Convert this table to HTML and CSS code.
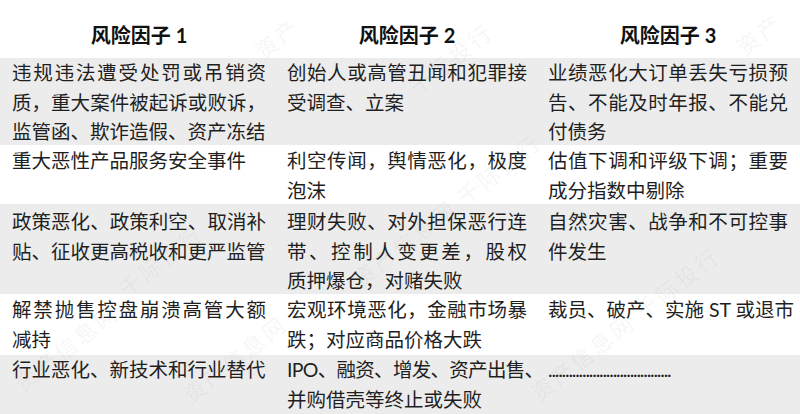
FILE: index.html
```html
<!DOCTYPE html>
<html lang="zh-CN">
<head>
<meta charset="utf-8">
<title>风险因子</title>
<link rel="stylesheet" href="styles.css">
</head>
<body>
<div class="page">
  <div class="table">
    <div class="row head">
      <div class="cell c1">风险因子 1</div>
      <div class="cell c2">风险因子 2</div>
      <div class="cell c3">风险因子 3</div>
    </div>
    <div class="row r1 gray">
      <div class="cell c1"><span class="ln j">违规违法遭受处罚或吊销资</span><span class="ln j">质，重大案件被起诉或败诉，</span><span class="ln">监管函、欺诈造假、资产冻结</span></div>
      <div class="cell c2"><span class="ln j">创始人或高管丑闻和犯罪接</span><span class="ln">受调查、立案</span></div>
      <div class="cell c3"><span class="ln j">业绩恶化大订单丢失亏损预</span><span class="ln j">告、不能及时年报、不能兑</span><span class="ln">付债务</span></div>
    </div>
    <div class="row r2">
      <div class="cell c1"><span class="ln">重大恶性产品服务安全事件</span></div>
      <div class="cell c2"><span class="ln j">利空传闻，舆情恶化，极度</span><span class="ln">泡沫</span></div>
      <div class="cell c3"><span class="ln j">估值下调和评级下调；重要</span><span class="ln">成分指数中剔除</span></div>
    </div>
    <div class="row r3 gray">
      <div class="cell c1"><span class="ln j">政策恶化、政策利空、取消补</span><span class="ln">贴、征收更高税收和更严监管</span></div>
      <div class="cell c2"><span class="ln j">理财失败、对外担保恶行连</span><span class="ln j">带、控制人变更差，股权</span><span class="ln">质押爆仓，对赌失败</span></div>
      <div class="cell c3"><span class="ln j">自然灾害、战争和不可控事</span><span class="ln">件发生</span></div>
    </div>
    <div class="row r4">
      <div class="cell c1"><span class="ln j">解禁抛售控盘崩溃高管大额</span><span class="ln">减持</span></div>
      <div class="cell c2"><span class="ln j">宏观环境恶化，金融市场暴</span><span class="ln">跌；对应商品价格大跌</span></div>
      <div class="cell c3"><span class="ln">裁员、破产、实施 ST 或退市</span></div>
    </div>
    <div class="row r5 gray">
      <div class="cell c1"><span class="ln">行业恶化、新技术和行业替代</span></div>
      <div class="cell c2"><span class="ln j tight">IPO、融资、增发、资产出售、</span><span class="ln">并购借壳等终止或失败</span></div>
      <div class="cell c3"><span class="ln dots">....................................</span></div>
    </div>
  </div>
  <span class="wm wm-1">资产信息网</span>
  <span class="wm wm-2">千际投行</span>
  <span class="wm wm-3">资产信息网 千际投行</span>
  <span class="wm wm-4">资产信息网 千际投行</span>
  <span class="wm wm-5">千际投行</span>
  <span class="wm wm-6">资产信息网</span>
  <span class="wm wm-7">资产</span>
  <span class="wm wm-8">资产</span>
</div>
</body>
</html>
```

FILE: styles.css
```css
html, body {
  margin: 0;
  padding: 0;
  background: #ffffff;
}

.page {
  position: relative;
  width: 800px;
  height: 414px;
  overflow: hidden;
  font-family: Lato, "Noto Sans CJK SC", sans-serif;
  color: #1f1f1f;
}

.table {
  display: flex;
  flex-direction: column;
}

.row {
  display: grid;
  grid-template-columns: 276px 261px 263px;
  font-size: 19.5px;
  line-height: 29.5px;
}

.gray {
  background: #ececec;
}

.cell {
  box-sizing: border-box;
}

.c1 { padding-left: 12px; padding-right: 10px; }
.c2 { padding-left: 11px; padding-right: 10px; }
.c3 { padding-left: 11px; padding-right: 12px; }

.head {
  height: 58px;
  font-size: 20px;
  font-weight: 700;
  color: #111111;
  text-align: center;
  line-height: 29px;
}

.head .cell {
  padding-top: 21px;
}

.r1 { height: 87px; }
.r2 { height: 59px; }
.r3 { height: 90px; }
.r4 { height: 61px; }
.r5 { height: 59px; }

.r1 .cell { padding-top: 0; }
.r2 .cell { padding-top: 1px; }
.r3 .cell { padding-top: 3px; }
.r4 .cell { padding-top: 1px; }
.r5 .cell { padding-top: 0; }

.ln {
  display: block;
  white-space: nowrap;
}

.j {
  text-align: justify;
  text-align-last: justify;
  text-justify: inter-character;
}

.tight {
  letter-spacing: -0.7px;
}

.dots {
  letter-spacing: -1.2px;
}

.wm {
  position: absolute;
  font-family: "Noto Sans CJK SC", sans-serif;
  font-size: 22px;
  line-height: 24px;
  letter-spacing: 3px;
  white-space: nowrap;
  color: rgba(120, 120, 120, 0.08);
  transform-origin: 0 100%;
  transform: rotate(-38deg);
  pointer-events: none;
}

.wm-1 { left: 24px;  top: 370px; }
.wm-2 { left: 128px; top: 276px; }
.wm-3 { left: 362px; top: 266px; }
.wm-4 { left: 540px; top: 380px; }
.wm-5 { left: 418px; top: 74px; }
.wm-6 { left: 192px; top: 382px; }
.wm-7 { left: 746px; top: 34px; }
.wm-8 { left: 264px; top: 38px; }
```
